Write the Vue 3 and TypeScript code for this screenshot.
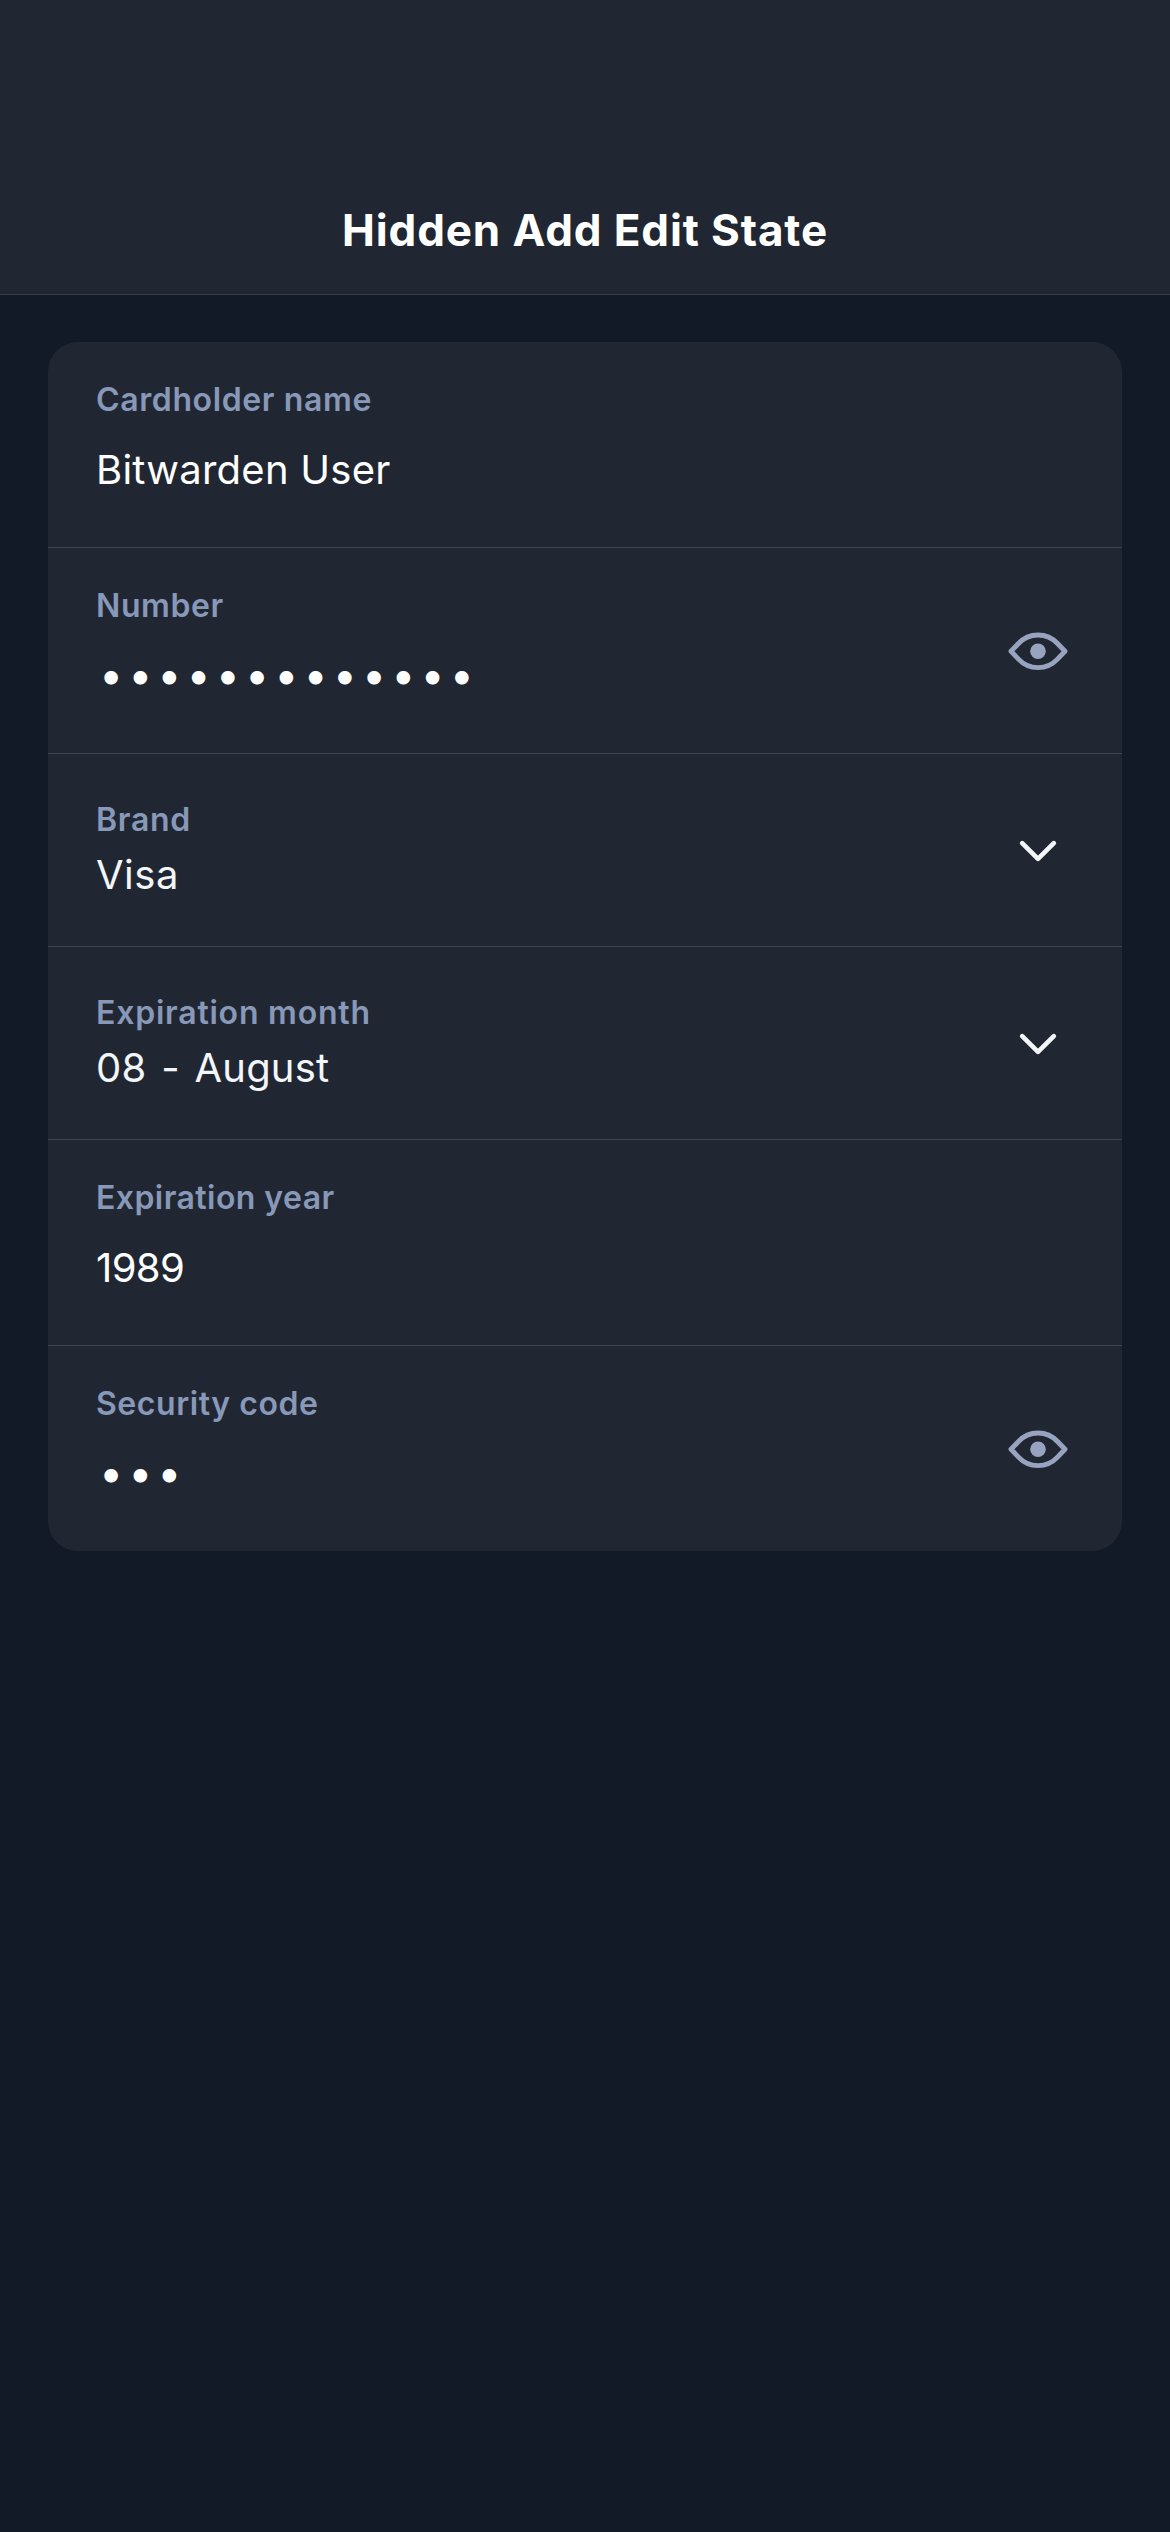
<script setup lang="ts">
interface Field {
  label: string
  value: string
  kind: 'text' | 'secret' | 'menu'
  labelTracking: number
  valueTracking?: number
}

const fields: Field[] = [
  { label: 'Cardholder name', value: 'Bitwarden User', kind: 'text', labelTracking: 0.62, valueTracking: 0.25 },
  { label: 'Number', value: '•'.repeat(13), kind: 'secret', labelTracking: 0.58 },
  { label: 'Brand', value: 'Visa', kind: 'menu', labelTracking: 0.7, valueTracking: 0.5 },
  { label: 'Expiration month', value: '08 - August', kind: 'menu', labelTracking: 0.78, valueTracking: 0.2 },
  { label: 'Expiration year', value: '1989', kind: 'text', labelTracking: 0.44, valueTracking: -0.6 },
  { label: 'Security code', value: '•••', kind: 'secret', labelTracking: 0.56 },
]

const tracking = (px?: number) => (px === undefined ? undefined : { letterSpacing: `${px}px` })
</script>

<template>
  <main class="screen">
    <header class="bar">
      <h1>Hidden Add Edit State</h1>
    </header>
    <section class="card">
      <div v-for="f in fields" :key="f.label" class="row" :class="f.kind">
        <div class="copy">
          <div class="label" :style="tracking(f.labelTracking)">{{ f.label }}</div>
          <div class="value" :style="tracking(f.valueTracking)">{{ f.value }}</div>
        </div>
        <svg v-if="f.kind === 'secret'" class="icon" viewBox="0 0 60 60" aria-hidden="true">
          <path
            d="M3 30.3 10.5 22.5C16 16.6 22 14 30 14S44 16.6 49.5 22.5L57 30.3 49.5 38.1C44 44 38 46.6 30 46.6S16 44 10.5 38.1Z"
            fill="none"
            stroke="currentColor"
            stroke-width="4.9"
            stroke-linejoin="round"
          />
          <circle cx="30" cy="30.3" r="7.8" fill="currentColor" />
        </svg>
        <svg v-else-if="f.kind === 'menu'" class="icon" viewBox="0 0 60 60" aria-hidden="true">
          <path
            d="M14.2 23.2 30 38.8 45.8 23.2"
            fill="none"
            stroke="currentColor"
            stroke-width="4.7"
            stroke-linecap="round"
            stroke-linejoin="round"
          />
        </svg>
      </div>
    </section>
  </main>
</template>

<style>
body {
  background: #131a27;
}
</style>

<style scoped>
.screen {
  box-sizing: border-box;
  width: 1170px;
  height: 2532px;
  overflow: hidden;
  background: #131a27;
  font-family: Inter, sans-serif;
  color: #fff;
}

.bar {
  box-sizing: border-box;
  height: 295px;
  padding-top: 200px;
  border-bottom: 1px solid #363e4b;
  background: #212732;
  text-align: center;
}

h1 {
  margin: 0;
  font-size: 44px;
  line-height: 60px;
  font-weight: 700;
  letter-spacing: 0.88px;
}

.card {
  margin: 47px 48px 0;
  border-radius: 30px;
  background: #212732;
  overflow: hidden;
}

.row {
  box-sizing: border-box;
  display: flex;
  align-items: center;
  justify-content: space-between;
  height: 206px;
  padding: 0 54px 0 48px;
  border-bottom: 1px solid #3f4550;
}

.row:last-child {
  height: 205px;
  border-bottom: 0;
}

.copy {
  align-self: flex-start;
  padding-top: 38px;
}

.label {
  font-size: 32px;
  line-height: 40px;
  font-weight: 600;
  color: #8898b8;
}

.value {
  margin-top: 26px;
  font-size: 40px;
  line-height: 48px;
  white-space: nowrap;
}

.secret .value {
  margin-top: 24px;
  padding-left: 2.9px;
  font-size: 43px;
  letter-spacing: 5.05px;
}

.row.menu {
  height: 193px;
}

.menu .copy {
  padding-top: 46px;
}

.menu .value {
  margin-top: 11px;
  color: #f3f6f9;
  word-spacing: 3.3px;
}

.icon {
  width: 60px;
  height: 60px;
  flex: none;
}

.secret .icon {
  color: #98a4bf;
}

.menu .icon {
  color: #f3f6f9;
}
</style>
